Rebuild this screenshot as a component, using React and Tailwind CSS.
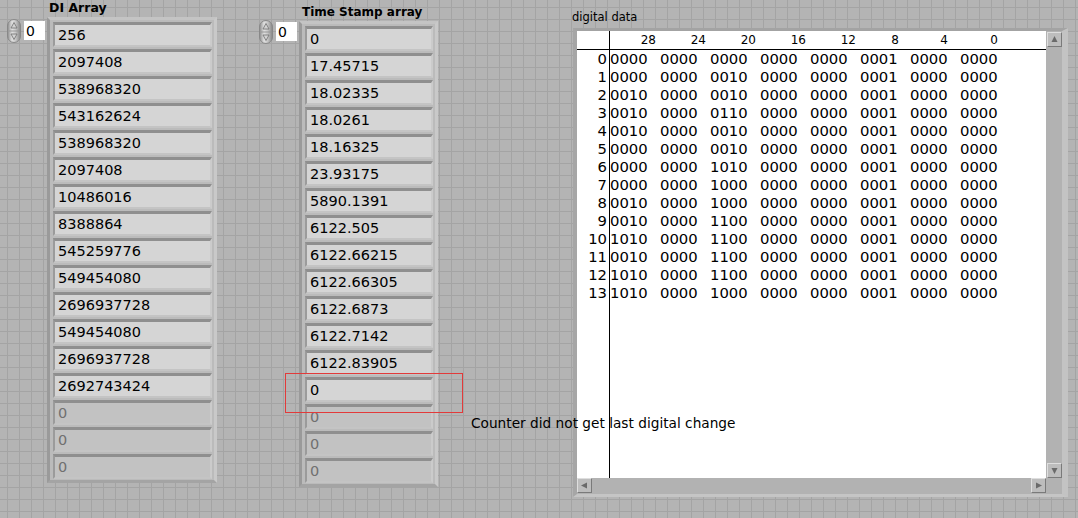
import React from 'react';

const diValues = [
  '256', '2097408', '538968320', '543162624', '538968320', '2097408', '10486016', '8388864',
  '545259776', '549454080', '2696937728', '549454080', '2696937728', '2692743424',
];
const tsValues = [
  '0', '17.45715', '18.02335', '18.0261', '18.16325', '23.93175', '5890.1391', '6122.505',
  '6122.66215', '6122.66305', '6122.6873', '6122.7142', '6122.83905', '0',
];

const digital = [
  '0000 0000 0000 0000 0000 0001 0000 0000',
  '0000 0000 0010 0000 0000 0001 0000 0000',
  '0010 0000 0010 0000 0000 0001 0000 0000',
  '0010 0000 0110 0000 0000 0001 0000 0000',
  '0010 0000 0010 0000 0000 0001 0000 0000',
  '0000 0000 0010 0000 0000 0001 0000 0000',
  '0000 0000 1010 0000 0000 0001 0000 0000',
  '0000 0000 1000 0000 0000 0001 0000 0000',
  '0010 0000 1000 0000 0000 0001 0000 0000',
  '0010 0000 1100 0000 0000 0001 0000 0000',
  '1010 0000 1100 0000 0000 0001 0000 0000',
  '0010 0000 1100 0000 0000 0001 0000 0000',
  '1010 0000 1100 0000 0000 0001 0000 0000',
  '1010 0000 1000 0000 0000 0001 0000 0000',
];

// header labels with their right padding inside 50px columns
const bitHeaders = [
  { label: '28', pr: 'pr-[4px]' },
  { label: '24', pr: 'pr-[4px]' },
  { label: '20', pr: 'pr-[4px]' },
  { label: '16', pr: 'pr-[4px]' },
  { label: '12', pr: 'pr-[4px]' },
  { label: '8', pr: 'pr-[11px]' },
  { label: '4', pr: 'pr-[12px]' },
  { label: '0', pr: 'pr-[12px]' },
];

function Spinner() {
  return (
    <svg width="14" height="24" viewBox="0 0 14 24">
      <defs>
        <linearGradient id="spin" x1="0" x2="1" y1="0" y2="0">
          <stop offset="0" stopColor="#8a8a8a" />
          <stop offset="0.35" stopColor="#e0e0e0" />
          <stop offset="0.6" stopColor="#cacaca" />
          <stop offset="1" stopColor="#858585" />
        </linearGradient>
      </defs>
      <rect x="0.5" y="0.5" width="13" height="23" rx="6.5" fill="url(#spin)" stroke="#888888" />
      <line x1="2" y1="12" x2="12" y2="12" stroke="#979797" />
      <path d="M7 3.5 L10 9 L4 9 Z" fill="#d2d2d2" stroke="#707070" strokeWidth="0.8" />
      <path d="M7 20.5 L10 15 L4 15 Z" fill="#d2d2d2" stroke="#707070" strokeWidth="0.8" />
    </svg>
  );
}

function IndexControl() {
  return (
    <div className="flex items-start gap-[3px]">
      <Spinner />
      <div className="mt-[2px] w-[21px] h-[19px] bg-white flex items-center pl-[2px] text-[14px] leading-none text-black">
        0
      </div>
    </div>
  );
}

function Cell({ value, dim }) {
  return (
    <div
      className={`h-[25px] shrink-0 flex items-center pl-[3px] border-t-[3px] border-l-[2px] border-r-[2px] border-b-[2px] border-t-[#8f8f8f] border-l-[#9b9b9b] border-r-[#cbcbcb] border-b-[#c4c4c4] text-[14.5px] leading-none ${
        dim ? 'bg-[#c2c2c2] text-[#707070]' : 'bg-[#d5d5d5] text-black'
      }`}
    >
      {value}
    </div>
  );
}

function ArrayFrame({ values, width }) {
  return (
    <div
      className={`${width} h-[466px] border-[3px] border-t-[#c4c4c4] border-l-[#9a9a9a] border-r-[#c9c9c9] border-b-[#a4a4a4] bg-[#bbbbbb] pt-[2px] pl-[3px] pr-[2px] flex flex-col gap-[2px]`}
    >
      {values.map((v, i) => (
        <Cell key={i} value={v} />
      ))}
      {[0, 1, 2].map(i => (
        <Cell key={'d' + i} value="0" dim />
      ))}
    </div>
  );
}

function ScrollButton({ dir }) {
  const paths = {
    up: 'M7.5 4 L10.5 10 L4.5 10 Z',
    down: 'M7.5 11 L10.5 5 L4.5 5 Z',
    left: 'M4 7.5 L10 4.5 L10 10.5 Z',
    right: 'M11 7.5 L5 4.5 L5 10.5 Z',
  };
  return (
    <div className="w-[15px] h-[15px] shrink-0 bg-[#bdbdbd] border border-t-[#dedede] border-l-[#dedede] border-r-[#7a7a7a] border-b-[#7a7a7a] flex items-center justify-center">
      <svg width="13" height="13" viewBox="1 1 13 13">
        <path d={paths[dir]} fill="#6a6a6a" />
      </svg>
    </div>
  );
}

function DigitalTable() {
  return (
    <div className="w-[495px] h-[469px] bg-[#b2b2b2] border-t-[3px] border-l-[4px] border-r-[6px] border-b-[3px] border-t-[#a3a3a3] border-l-[#a6a6a6] border-r-[#c3c3c3] border-b-[#c5c5c5] flex">
      <div className="flex flex-col">
        <div className="w-[469px] h-[447px] bg-white flex flex-col">
          <div className="flex h-[19px] border-b border-black shrink-0">
            <div className="w-[33px] border-r border-black" />
            {bitHeaders.map(h => (
              <div key={h.label} className={`w-[50px] text-right ${h.pr} text-[12px] leading-[18px] text-black`}>
                {h.label}
              </div>
            ))}
          </div>
          <div className="flex flex-1">
            <div className="w-[33px] border-r border-black pr-[2px] flex flex-col">
              {digital.map((_, i) => (
                <div key={i} className="h-[18px] text-right text-[14.8px] leading-[18px] text-black">
                  {i}
                </div>
              ))}
            </div>
            <div className="flex flex-col">
              {digital.map((row, i) => (
                <div key={i} className="h-[18px] flex text-[14.8px] leading-[18px] text-black">
                  {row.split(' ').map((g, j) => (
                    <div key={j} className="w-[50px]">{g}</div>
                  ))}
                </div>
              ))}
            </div>
          </div>
        </div>
        <div className="h-[16px] flex items-start justify-between">
          <ScrollButton dir="left" />
          <ScrollButton dir="right" />
        </div>
      </div>
      <div className="w-[16px] h-[447px] flex flex-col justify-between items-end pt-[1px]">
        <ScrollButton dir="up" />
        <ScrollButton dir="down" />
      </div>
    </div>
  );
}

export default function App() {
  return (
    <div className="relative w-[1078px] h-[518px] overflow-hidden bg-[#b4b4b4] bg-[linear-gradient(to_right,#a4a4a4_1px,transparent_1px),linear-gradient(to_bottom,#a4a4a4_1px,transparent_1px)] bg-[size:12px_12px] bg-[position:7px_7px] font-['DejaVu_Sans',sans-serif] text-black flex items-start">
      {/* DI Array */}
      <div className="ml-[7px] flex items-start">
        <div className="mt-[19px]">
          <IndexControl />
        </div>
        <div className="ml-[2px] flex flex-col">
          <div className="h-[17px] pl-[2px] text-[12.5px] font-bold leading-[16px]">DI Array</div>
          <ArrayFrame values={diValues} width="w-[170px]" />
        </div>
      </div>

      {/* Time Stamp array */}
      <div className="ml-[42px] flex items-start">
        <div className="mt-[20px]">
          <IndexControl />
        </div>
        <div className="ml-[2px] flex flex-col">
          <div className="mt-[4px] h-[17px] pl-[3px] text-[12px] font-bold leading-[16px]">Time Stamp array</div>
          <ArrayFrame values={tsValues} width="w-[139px]" />
        </div>
      </div>

      {/* digital data */}
      <div className="ml-[134px] flex flex-col">
        <div className="mt-[8px] h-[20px] text-[11.5px] leading-[18px] text-black">digital data</div>
        <div className="ml-[1px]">
          <DigitalTable />
        </div>
      </div>

      {/* annotation */}
      <div className="absolute left-[285px] top-[373px] w-[178px] h-[40px] border border-[#e23a3a]" />
      <div className="absolute left-[471px] top-[414px] text-[13.7px] leading-[18px] text-black whitespace-nowrap">
        Counter did not get last digital change
      </div>
    </div>
  );
}
